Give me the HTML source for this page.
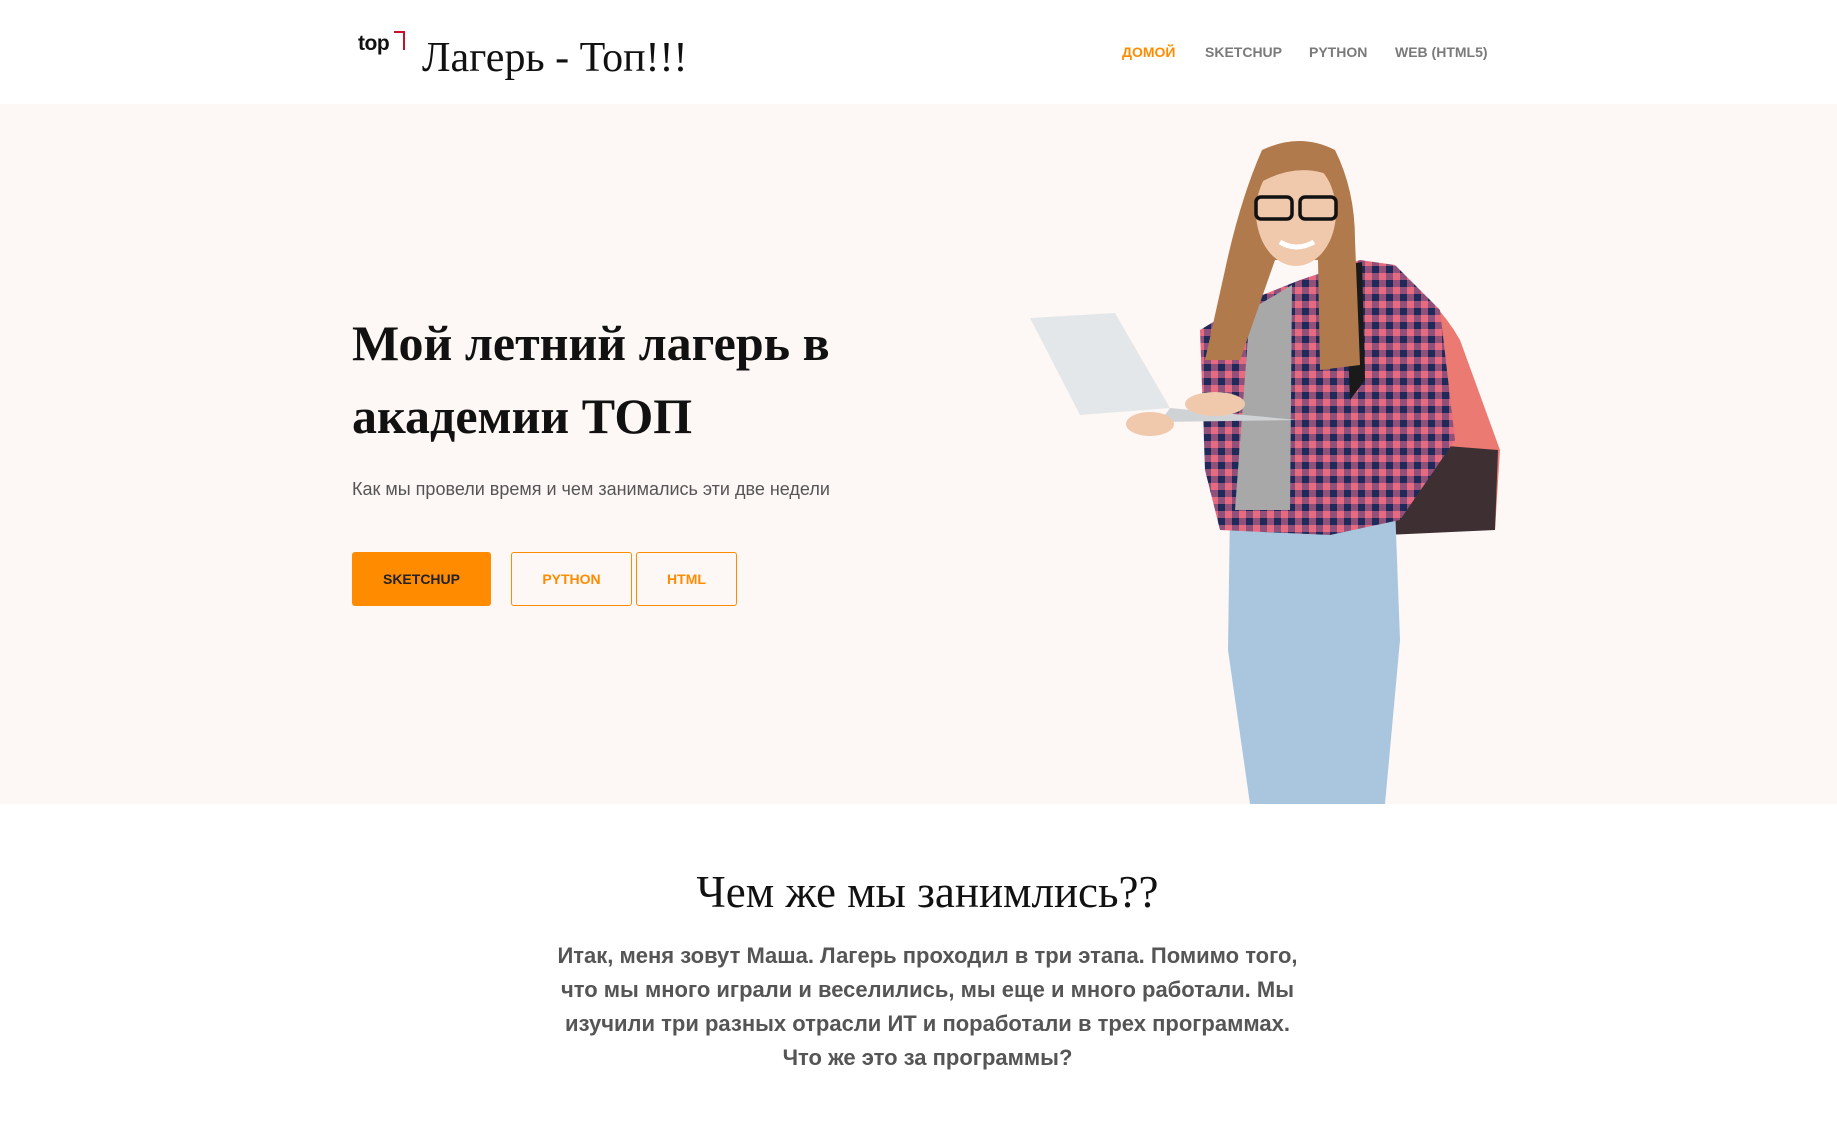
<!DOCTYPE html>
<html><head><meta charset="utf-8"><style>
*{margin:0;padding:0;box-sizing:border-box}
body{width:1837px;height:1124px;background:#fff;position:relative;overflow:hidden;font-family:"Liberation Sans",Arial,sans-serif}
.abs{position:absolute;white-space:nowrap}
.hero{position:absolute;left:0;top:104px;width:1837px;height:700px;background:#fdf8f5}
.nav{font-weight:bold;font-size:14px;color:#7a7a7a;top:44px}
.btn{position:absolute;top:552px;height:54px;border-radius:3px;font-weight:bold;font-size:14px;display:flex;align-items:center;justify-content:center}
</style></head><body>
<div class="abs" style="left:358px;top:32px;font-weight:bold;font-size:21px;color:#111;letter-spacing:-0.5px">top</div>
<div class="abs" style="left:394px;top:31px;width:11px;height:19px;border-top:2px solid #c8102e;border-right:2px solid #c8102e"></div>
<div class="abs" style="left:422px;top:34px;font-family:'Liberation Serif',serif;font-size:42px;color:#111">Лагерь - Топ!!!</div>
<div class="abs nav" style="left:1122px;color:#ff8c00">ДОМОЙ</div>
<div class="abs nav" style="left:1205px">SKETCHUP</div>
<div class="abs nav" style="left:1309px">PYTHON</div>
<div class="abs nav" style="left:1395px">WEB (HTML5)</div>
<div class="hero"></div>
<div class="abs" style="left:352px;top:307px;font-family:'Liberation Serif',serif;font-weight:bold;font-size:50px;line-height:73px;color:#111">Мой летний лагерь в<br>академии ТОП</div>
<div class="abs" style="left:352px;top:479px;font-size:18px;color:#555">Как мы провели время и чем занимались эти две недели</div>
<div class="btn" style="left:352px;width:139px;background:#ff8c00;color:#222">SKETCHUP</div>
<div class="btn" style="left:511px;width:121px;border:1px solid #ff8c00;color:#ff8c00">PYTHON</div>
<div class="btn" style="left:636px;width:101px;border:1px solid #ff8c00;color:#ff8c00">HTML</div>
<svg class="abs" style="left:1020px;top:130px" width="500" height="674" viewBox="1020 130 500 674">
<defs><pattern id="pl" width="14" height="14" patternUnits="userSpaceOnUse"><rect width="14" height="14" fill="#e66a80"/><rect width="7" height="14" fill="#7a4a78" opacity=".8"/><rect width="14" height="7" fill="#7a4a78" opacity=".8"/><rect width="7" height="7" fill="#1f2a5a"/></pattern></defs>
<path d="M1345 262 Q1420 270 1460 340 L1500 450 L1495 530 L1380 530 L1345 400Z" fill="#ea7a72"/>
<path d="M1370 440 L1498 450 L1495 530 L1385 535Z" fill="#3e2f33"/>
<path d="M1230 510 L1395 505 L1400 640 L1385 804 L1250 804 L1228 650Z" fill="#a9c6de"/>
<path d="M1250 300 L1300 280 L1360 260 L1395 265 L1440 310 L1455 440 L1400 520 L1330 535 L1220 530 L1205 470 L1200 330Z" fill="url(#pl)"/>
<path d="M1250 310 L1292 285 L1290 510 L1235 510Z" fill="#a8a8a8"/>
<path d="M1345 265 L1362 262 L1365 380 L1350 400Z" fill="#1a1a1a"/>
<path d="M1262 150 Q1300 132 1335 150 Q1355 190 1355 240 L1360 365 L1320 370 L1318 260 L1275 260 L1240 360 L1205 360 L1225 270 Q1240 200 1262 150Z" fill="#b07a4c"/>
<ellipse cx="1296" cy="212" rx="40" ry="54" fill="#f0c9ad"/>
<path d="M1256 185 Q1265 145 1300 143 Q1335 145 1340 180 Q1300 158 1256 185Z" fill="#b07a4c"/>
<rect x="1256" y="197" width="36" height="22" rx="5" fill="none" stroke="#111" stroke-width="3.5"/>
<rect x="1300" y="197" width="36" height="22" rx="5" fill="none" stroke="#111" stroke-width="3.5"/>
<path d="M1280 242 Q1296 252 1314 242" stroke="#fff" stroke-width="5" fill="none"/>
<path d="M1030 318 L1115 313 L1170 408 L1080 415Z" fill="#e4e7ea"/>
<path d="M1170 408 L1297 420 L1160 422Z" fill="#cfd3d6"/>
<ellipse cx="1150" cy="424" rx="24" ry="12" fill="#f0c9ad"/>
<ellipse cx="1215" cy="404" rx="30" ry="12" fill="#f0c9ad"/>
</svg>
<div class="abs" style="left:9px;width:1837px;top:866px;text-align:center;font-family:'Liberation Serif',serif;font-size:45px;color:#111">Чем же мы занимлись??</div>
<div class="abs" style="left:9px;width:1837px;top:939px;text-align:center;font-weight:bold;font-size:22px;line-height:34px;color:#555;white-space:normal">Итак, меня зовут Маша. Лагерь проходил в три этапа. Помимо того,<br>что мы много играли и веселились, мы еще и много работали. Мы<br>изучили три разных отрасли ИТ и поработали в трех программах.<br>Что же это за программы?</div>
</body></html>
